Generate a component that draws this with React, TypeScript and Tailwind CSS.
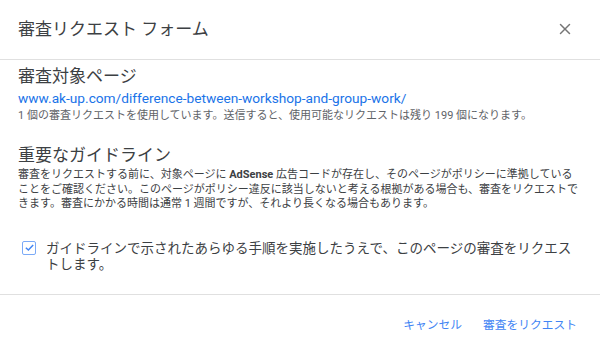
import { X } from "lucide-react";

const font = { fontFamily: '"Roboto", "Noto Sans CJK JP", sans-serif' };

const App = () => {
    return (
        <div className="w-[600px] h-[355px] bg-white flex flex-col overflow-hidden text-[#202124]" style={font}>
            {/* Header */}
            <div className="h-[60px] flex items-center justify-between pl-[18px] pr-[26px] border-b border-[#e0e0e0] shrink-0">
                <h1 className="text-[17px] leading-5 text-[#3c4043] -mt-[2px]">審査リクエスト フォーム</h1>
                <X className="w-[18px] h-[18px] text-[#757575] -mt-[2px]" strokeWidth={2} />
            </div>

            {/* Content */}
            <div className="flex flex-col px-[18px] pr-[20px]">
                <h2 className="mt-[6px] text-[17px] leading-5 text-[#3c4043]">審査対象ページ</h2>
                <a className="mt-[2px] text-[13.7px] leading-5 text-[#1a73e8]">
                    www.ak-up.com/difference-between-workshop-and-group-work/
                </a>
                <p className="text-[11px] leading-4 text-[#5f6368]">
                    1 個の審査リクエストを使用しています。送信すると、使用可能なリクエストは残り 199 個になります。
                </p>

                <h2 className="mt-[21px] text-[17px] leading-5 text-[#3c4043]">重要なガイドライン</h2>
                <p className="mt-[3px] text-[11px] leading-[14.5px] text-[#3c4043]">
                    審査をリクエストする前に、対象ページに <span className="font-bold">AdSense</span> 広告コードが存在し、そのページがポリシーに準拠していることをご確認ください。このページがポリシー違反に該当しないと考える根拠がある場合も、審査をリクエストできます。審査にかかる時間は通常 1 週間ですが、それより長くなる場合もあります。
                </p>

                {/* Checkbox */}
                <label className="mt-[28px] flex items-start gap-[10px] pl-[4px]">
                    <span className="mt-[1px] w-[14px] h-[14px] shrink-0 rounded-[2px] border-[1.5px] border-[#7baaf7] flex items-center justify-center">
                        <svg viewBox="0 0 12 12" className="w-[11px] h-[11px]">
                            <path d="M2 6.2 L4.8 8.8 L10 3.2" fill="none" stroke="#4285f4" strokeWidth="1.6" />
                        </svg>
                    </span>
                    <span className="text-[13.5px] leading-4 text-[#3c4043] w-[535px]">
                        ガイドラインで示されたあらゆる手順を実施したうえで、このページの審査をリクエストします。
                    </span>
                </label>
            </div>

            {/* Footer */}
            <div className="mt-[22px] border-t border-[#e0e0e0] flex justify-end gap-[21px] pt-[22px] pr-[23px]">
                <button className="text-[11.75px] leading-4 text-[#4285f4]">キャンセル</button>
                <button className="text-[11.75px] leading-4 text-[#4285f4]">審査をリクエスト</button>
            </div>
        </div>
    );
};

export default App;
